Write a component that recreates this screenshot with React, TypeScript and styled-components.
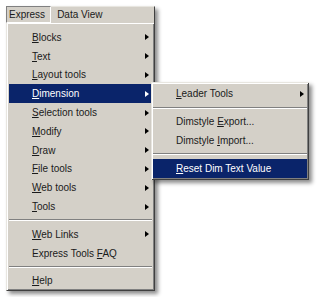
import styled, { createGlobalStyle } from 'styled-components';

const GlobalStyle = createGlobalStyle`
  html, body {
    margin: 0;
    padding: 0;
    background: #ffffff;
  }
  body {
    font-family: "Liberation Sans", Arial, sans-serif;
    font-size: 10px;
    color: #000;
  }
`;

const FACE = '#d4d0c8';
const HILITE = '#0a246a';

type Entry =
  | { kind: 'item'; pre?: string; key: string; post: string; sub?: boolean; active?: boolean }
  | { kind: 'sep' };

const mainItems: Entry[] = [
  { kind: 'item', key: 'B', post: 'locks', sub: true },
  { kind: 'item', key: 'T', post: 'ext', sub: true },
  { kind: 'item', key: 'L', post: 'ayout tools', sub: true },
  { kind: 'item', key: 'D', post: 'imension', sub: true, active: true },
  { kind: 'item', key: 'S', post: 'election tools', sub: true },
  { kind: 'item', key: 'M', post: 'odify', sub: true },
  { kind: 'item', key: 'D', post: 'raw', sub: true },
  { kind: 'item', key: 'F', post: 'ile tools', sub: true },
  { kind: 'item', key: 'W', post: 'eb tools', sub: true },
  { kind: 'item', key: 'T', post: 'ools', sub: true },
  { kind: 'sep' },
  { kind: 'item', key: 'W', post: 'eb Links', sub: true },
  { kind: 'item', pre: 'Express Tools ', key: 'F', post: 'AQ' },
  { kind: 'sep' },
  { kind: 'item', key: 'H', post: 'elp' },
];

const dimensionItems: Entry[] = [
  { kind: 'item', key: 'L', post: 'eader Tools', sub: true },
  { kind: 'sep' },
  { kind: 'item', pre: 'Dimstyle ', key: 'E', post: 'xport...' },
  { kind: 'item', pre: 'Dimstyle ', key: 'I', post: 'mport...' },
  { kind: 'sep' },
  { kind: 'item', key: 'R', post: 'eset Dim Text Value', active: true },
];

function renderEntries(entries: Entry[]) {
  return entries.map((e, i) => {
    if (e.kind === 'sep') return <Separator key={i} />;
    return (
      <Item key={i} $active={e.active}>
        <span>
          {e.pre}
          <AccessKey>{e.key}</AccessKey>
          {e.post}
        </span>
        {e.sub && <Arrow $active={e.active} />}
        {e.active && e.post === 'imension' && (
          <SubMenu>{renderEntries(dimensionItems)}</SubMenu>
        )}
      </Item>
    );
  });
}

export default function App() {
  return (
    <>
      <GlobalStyle />
      <Page>
        <Frame>
          <MenuBar>
            <BarItem $pressed>Express</BarItem>
            <BarItem>Data View</BarItem>
          </MenuBar>
          <Dropdown>{renderEntries(mainItems)}</Dropdown>
        </Frame>
      </Page>
    </>
  );
}

const Page = styled.div`
  padding: 6px;
`;

const Frame = styled.div`
  width: 147px;
  background: ${FACE};
  border: 1px solid;
  border-color: #e8e6e0 #404040 #404040 #e8e6e0;
  box-shadow: 3px 3px 4px rgba(0, 0, 0, 0.45);
`;

const MenuBar = styled.div`
  display: flex;
  height: 17px;
  margin-top: -1px;
  margin-left: -1px;
`;

const BarItem = styled.div<{ $pressed?: boolean }>`
  display: flex;
  align-items: center;
  height: 15px;
  padding: 0 5px 0 2px;
  border: 1px solid;
  border-color: ${({ $pressed }) => ($pressed ? '#808080 #ffffff #ffffff #808080' : 'transparent')};
  color: #1a1a1a;
  &:last-child {
    padding-left: 5px;
  }
`;

const Dropdown = styled.div`
  padding: 5px 2px 0 2px;
  box-shadow: inset 1px 1px #ffffff, inset -1px -1px #808080;
`;

const Item = styled.div<{ $active?: boolean }>`
  position: relative;
  display: flex;
  align-items: center;
  height: 18.8px;
  padding: 0 3px 0 23px;
  background: ${({ $active }) => ($active ? HILITE : 'transparent')};
  color: ${({ $active }) => ($active ? '#ffffff' : '#1a1a1a')};
  white-space: nowrap;
`;

const AccessKey = styled.span`
  text-decoration: underline;
  text-underline-offset: 1px;
`;

const Arrow = styled.span<{ $active?: boolean }>`
  margin-left: auto;
  width: 0;
  height: 0;
  border-top: 3.5px solid transparent;
  border-bottom: 3.5px solid transparent;
  border-left: 4px solid ${({ $active }) => ($active ? '#ffffff' : '#000000')};
`;

const Separator = styled.div`
  height: 9px;
  display: flex;
  align-items: center;
  &::after {
    content: '';
    flex: 1;
    height: 0;
    border-top: 1px solid #808080;
    border-bottom: 1px solid #ffffff;
  }
`;

const SubMenu = styled.div`
  position: absolute;
  left: 142px;
  top: -2px;
  width: 154px;
  padding: 2px;
  background: ${FACE};
  color: #1a1a1a;
  box-shadow:
    inset 1px 1px #e8e6e0,
    inset -1px -1px #404040,
    inset 2px 2px #ffffff,
    inset -2px -2px #808080,
    3px 3px 4px rgba(0, 0, 0, 0.45);
  z-index: 2;
`;
